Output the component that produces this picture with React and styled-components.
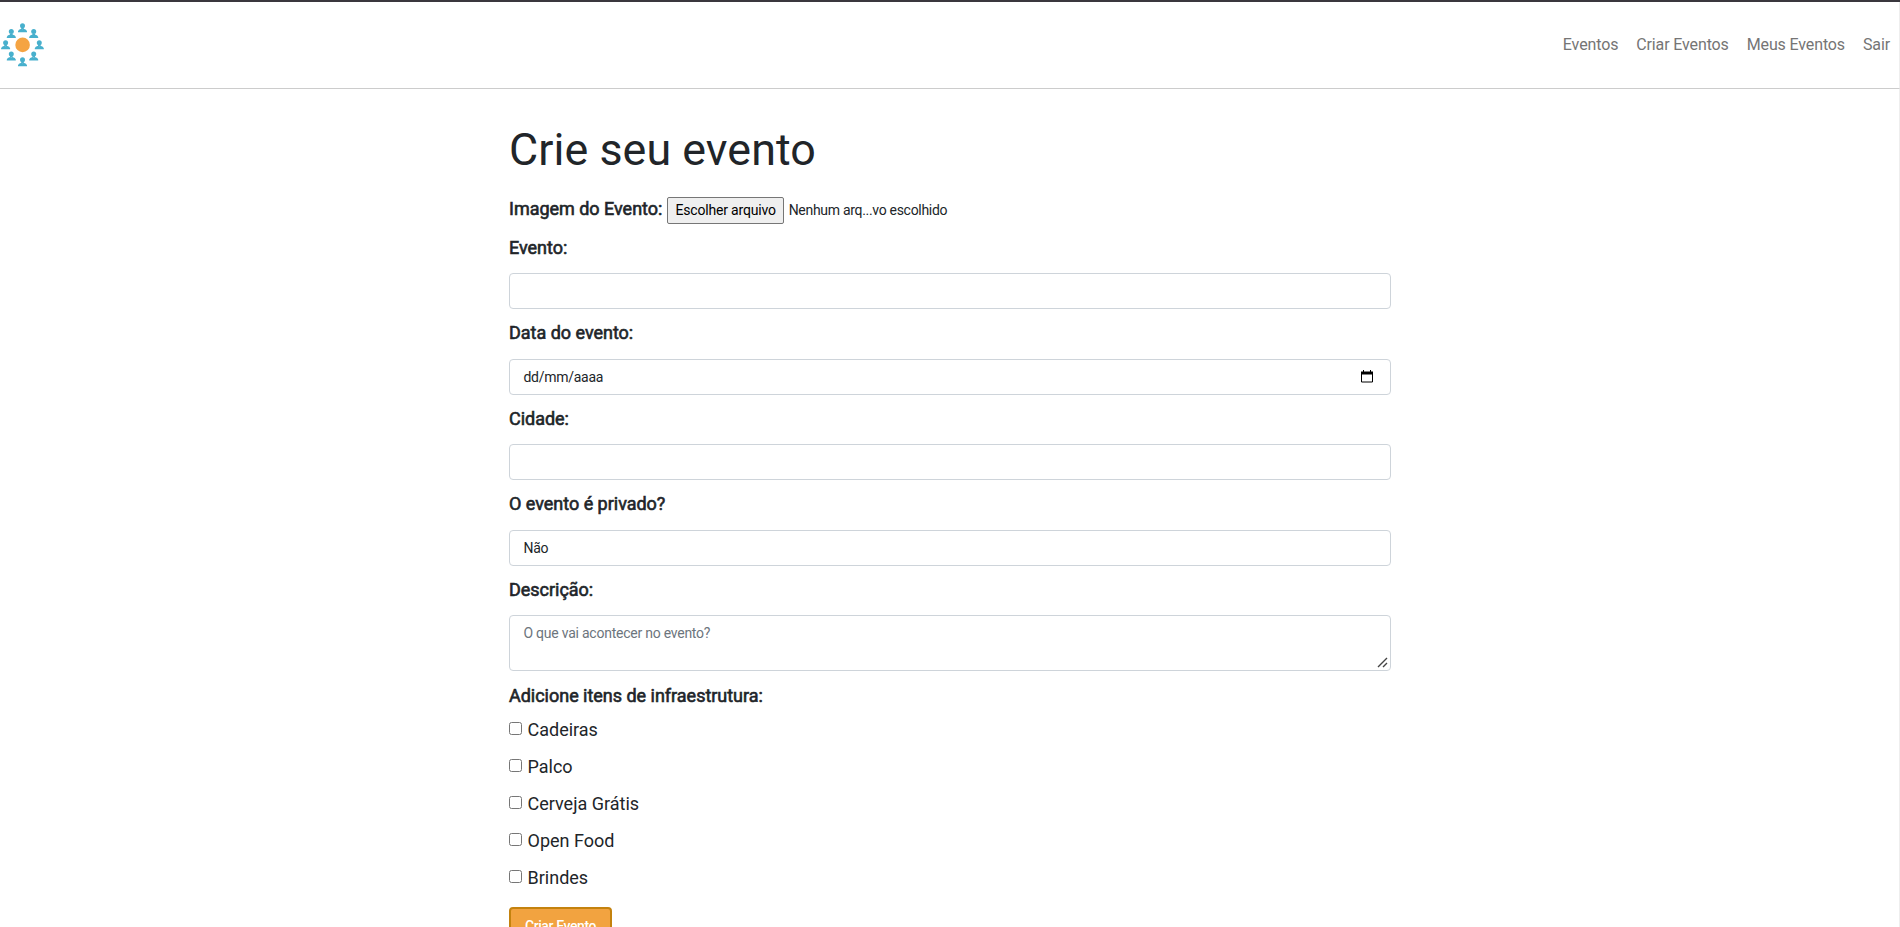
import React from "react";
import styled, { createGlobalStyle } from "styled-components";

const GlobalStyle = createGlobalStyle`
  *, *::before, *::after { box-sizing: border-box; }
  html, body { margin: 0; height: 100%; overflow: hidden; }
  body {
    font-family: Roboto, "Liberation Sans", sans-serif;
    font-size: 16px;
    line-height: 1.5;
    color: #212529;
    background: #fff;
  }
`;

const Page = styled.div`
  height: 927px;
  overflow: hidden;
  border-top: 2px solid #3a373d;
`;

const Header = styled.header`
  display: flex;
  align-items: center;
  justify-content: space-between;
  height: 87px;
  border-bottom: 1px solid #ccc;
  border-right: 1px solid #eee;
`;

const Logo = styled.svg`
  display: block;
  width: 45px;
  height: 45px;
`;

const Nav = styled.nav`
  display: flex;
  gap: 18px;
  padding-right: 9px;
`;

const NavLink = styled.a`
  color: #757575;
  letter-spacing: -0.13px;
  white-space: nowrap;
`;

const Body = styled.div`
  height: 838px;
  border-right: 1px solid #eee;
`;

const Main = styled.main`
  width: 882px;
  margin-left: 509px;
  padding-top: 34px;
`;

const Title = styled.h1`
  margin: 0 0 20px;
  font-size: 44.8px;
  font-weight: 400;
  line-height: 53px;
  letter-spacing: 0.06px;
  white-space: nowrap;
`;

const Label = styled.label`
  display: block;
  font-size: 18px;
  line-height: 26px;
  letter-spacing: -0.02px;
  -webkit-text-stroke: 0.6px #212529;
  white-space: nowrap;
`;

const FileRow = styled.div`
  display: flex;
  align-items: center;
  height: 28px;
  margin-bottom: 10.9px;

  ${Label} { padding-bottom: 2px; }
`;

const FileButton = styled.button`
  height: 27px;
  margin: 0 4.5px 0 4.8px;
  width: 117px;
  padding: 0;
  border: 1px solid #767676;
  border-radius: 2px;
  background: #efefef;
  color: #000;
  font: 14px Roboto, sans-serif;
  letter-spacing: -0.18px;
  white-space: nowrap;
`;

const FileName = styled.span`
  padding-top: 1px;
  font-size: 14px;
  letter-spacing: -0.3px;
  white-space: nowrap;
`;

const Field = styled.div`
  height: ${(p) => (p.$tall ? "106.5px" : "85.5px")};
`;

const Box = styled.div`
  display: flex;
  align-items: center;
  justify-content: space-between;
  height: 36px;
  margin-top: 12.4px;
  padding: 1px 17px 0 13.5px;
  border: 1px solid #ced4da;
  border-radius: 4px;
  font-size: 14px;
  letter-spacing: -0.28px;
  white-space: nowrap;

  svg { margin-bottom: 1px; }
`;

const TextAreaWrap = styled.div`
  position: relative;
  margin-top: 12.4px;
`;

const TextArea = styled.textarea`
  display: block;
  width: 100%;
  height: 56px;
  padding: 7px 13.5px;
  border: 1px solid #ced4da;
  border-radius: 4px;
  resize: none;
  font: 14px/1.5 Roboto, sans-serif;
  letter-spacing: -0.24px;
  &::placeholder { color: #6c757d; opacity: 1; }
`;

const Grip = styled.svg`
  position: absolute;
  right: 3px;
  bottom: 3px;
  width: 11px;
  height: 11px;
`;

const Options = styled.div`
  padding: 7px 0 6px;
`;

const Option = styled.label`
  display: flex;
  align-items: center;
  height: 27px;
  margin-bottom: 10px;
  font-size: 18px;
  white-space: nowrap;
`;

const Check = styled.input`
  width: 13px;
  height: 13px;
  margin: 0 5.5px 2px 0;
`;

const Submit = styled.button`
  display: block;
  width: 103px;
  height: 38px;
  padding: 1px 0 0;
  border: 2px solid #c4820e;
  border-radius: 4px;
  background: #f2a340;
  color: #fff;
  font: 500 14px/1.5 Roboto, sans-serif;
  letter-spacing: -0.4px;
  white-space: nowrap;
`;

const people = [
  [22.5, 26.8], [33.7, 32.6], [39.3, 43.8], [33.7, 55],
  [22.5, 60.8], [11.3, 55], [5.6, 43.8], [11.3, 32.6],
];

const Person = ({ x, y }) => (
  <g transform={`translate(${x} ${y - 22})`} fill="#48b0cd">
    <circle cx="0" cy="-2.1" r="2.5" />
    <path d="M-1.3 0h2.6v1.4h-2.6z" />
    <path d="M-4.5 4.5V3.4Q-4.2 1.4-1.2.9L0 1.5 1.2.9Q4.2 1.4 4.5 3.4V4.5z" />
  </g>
);

const CalendarIcon = () => (
  <svg width="12" height="13" viewBox="0 0 12 13">
    <path d="M.5 2.5h11v9.5H.5zM2.5 0v3M9.5 0v3" fill="none" stroke="#000" />
    <path d="M0 1.5h12v3H0z" />
  </svg>
);

export default function App() {
  return (
    <>
      <GlobalStyle />
      <Page>
        <Header>
          <Logo viewBox="0 0 45 45">
            <circle cx="22.6" cy="21.9" r="7.3" fill="#f5a443" />
            {people.map(([x, y]) => <Person key={`${x}-${y}`} x={x} y={y} />)}
          </Logo>
          <Nav>
            <NavLink>Eventos</NavLink>
            <NavLink>Criar Eventos</NavLink>
            <NavLink>Meus Eventos</NavLink>
            <NavLink>Sair</NavLink>
          </Nav>
        </Header>
        <Body>
          <Main>
            <Title>Crie seu evento</Title>
            <FileRow>
              <Label>Imagem do Evento:</Label>
              <FileButton type="button">Escolher arquivo</FileButton>
              <FileName>Nenhum arq...vo escolhido</FileName>
            </FileRow>
            <Field><Label>Evento:</Label><Box /></Field>
            <Field>
              <Label>Data do evento:</Label>
              <Box>dd/mm/aaaa<CalendarIcon /></Box>
            </Field>
            <Field><Label>Cidade:</Label><Box /></Field>
            <Field><Label>O evento é privado?</Label><Box>Não</Box></Field>
            <Field $tall>
              <Label>Descrição:</Label>
              <TextAreaWrap>
                <TextArea placeholder="O que vai acontecer no evento?" />
                <Grip viewBox="0 0 11 11">
                  <path d="M1 10L10 1M6 10l4-4" fill="none" stroke="#444" strokeWidth="1.4" />
                </Grip>
              </TextAreaWrap>
            </Field>
            <Label>Adicione itens de infraestrutura:</Label>
            <Options>
              {["Cadeiras", "Palco", "Cerveja Grátis", "Open Food", "Brindes"].map((item) => (
                <Option key={item}>
                  <Check type="checkbox" />
                  {item}
                </Option>
              ))}
            </Options>
            <Submit type="button">Criar Evento</Submit>
          </Main>
        </Body>
      </Page>
    </>
  );
}
